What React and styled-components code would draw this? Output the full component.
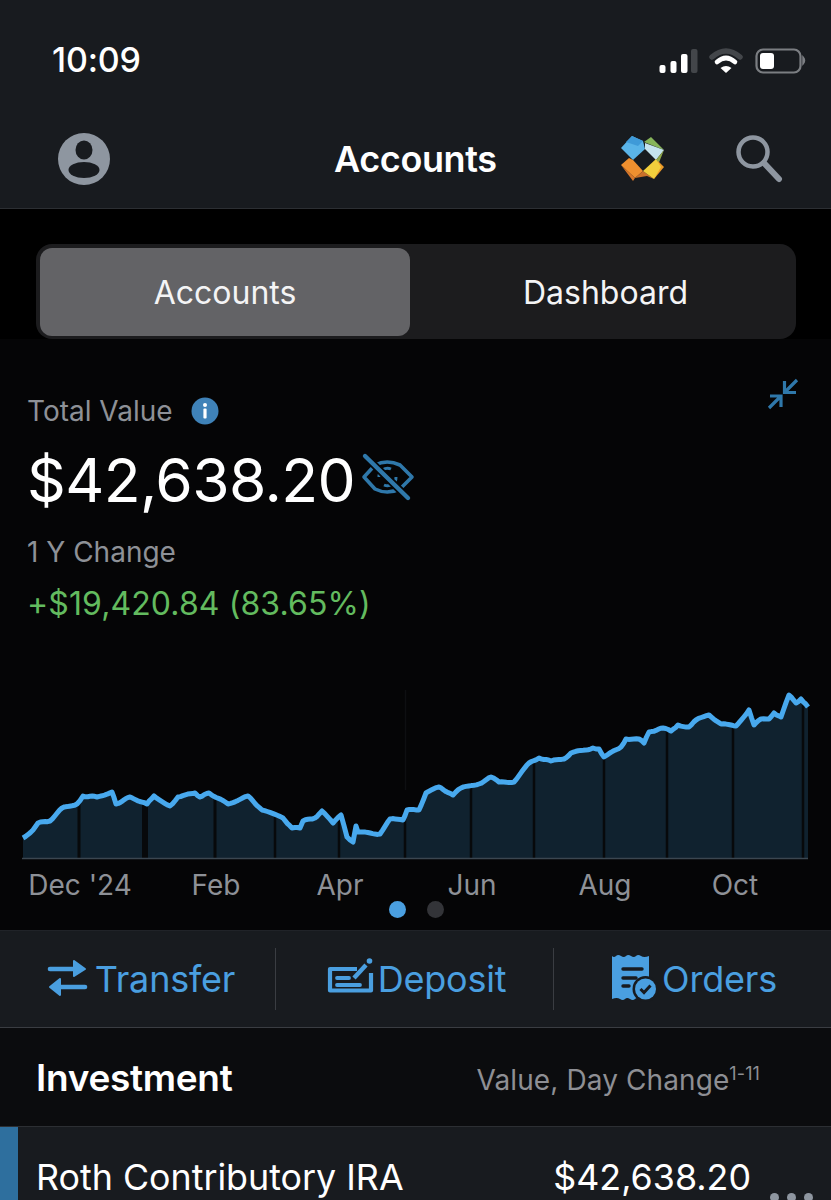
import React from 'react';
import styled, { createGlobalStyle } from 'styled-components';

const Global = createGlobalStyle`
  html, body { margin: 0; padding: 0; background: #000; }
  * { box-sizing: border-box; }
`;

const blue = '#4a9fe0';
const dimBlue = '#2f78aa';
const panel = '#181b1f';

const Page = styled.div`
  width: 831px;
  height: 1200px;
  overflow: hidden;
  position: relative;
  background: #000;
  color: #fff;
  font-family: Inter, "Liberation Sans", sans-serif;
`;

const Header = styled.header`
  height: 209px;
  background: ${panel};
  border-bottom: 1px solid #2c2f33;
  display: flex;
  flex-direction: column;
`;

const StatusBar = styled.div`
  height: 120px;
  padding: 40px 11px 0 52px;
  display: flex;
  justify-content: space-between;
  align-items: flex-start;
`;

const Clock = styled.span`
  font-size: 34px;
  line-height: 40px;
  font-weight: 500;
  letter-spacing: -0.2px;
`;

const NavBar = styled.nav`
  height: 80px;
  padding: 0 46px 2px 58px;
  display: grid;
  grid-template-columns: 276px auto 1fr;
  align-items: center;
`;

const NavTitle = styled.h1`
  margin: 0;
  font-size: 36px;
  font-weight: 600;
  letter-spacing: -0.4px;
`;

const NavRight = styled.div`
  display: flex;
  justify-content: flex-end;
  align-items: center;
  gap: 63px;
`;

const SegmentWrap = styled.div`
  padding: 35px 35px 0 36px;
  background: #000;
`;

const Segment = styled.div`
  height: 95px;
  padding: 4px 4px 3px;
  background: #1c1c1e;
  border-radius: 16px;
  display: grid;
  grid-template-columns: 370px 1fr;
`;

const SegmentItem = styled.div`
  height: 88px;
  border-radius: 12px;
  display: flex;
  align-items: center;
  justify-content: center;
  padding-left: ${p => (p.$active ? '0' : '9px')};
  font-size: 32px;
  color: #f4f4f5;
  background: ${p => (p.$active ? '#636366' : 'transparent')};
`;

const ChartSection = styled.section`
  position: relative;
  height: 591px;
  background: #050506;
  padding-top: 55px;
`;

const CollapseButton = styled.svg`
  position: absolute;
  right: 32px;
  top: 39px;
`;

const Caption = styled.div`
  margin-left: 27px;
  display: flex;
  align-items: center;
  gap: 18px;
  height: 34px;
  font-size: 28px;
  color: #8e9197;
`;

const BigValue = styled.div`
  margin: 17px 0 0 27px;
  height: 70px;
  display: flex;
  align-items: center;
  font-size: 60.5px;
  font-weight: 400;
  letter-spacing: -0.6px;
`;

const ChangeCaption = styled(Caption)`
  margin-top: 20px;
`;

const ChangeValue = styled.div`
  margin: 18px 0 0 27px;
  height: 34px;
  line-height: 34px;
  font-size: 32px;
  letter-spacing: 0.1px;
  color: #63bb5f;
`;

const ChartSvg = styled.svg`
  display: block;
  margin-top: 59px;
`;

const AxisRow = styled.div`
  margin: 6px 0 0 12px;
  width: 796px;
  display: grid;
  grid-template-columns: 136px 136px 112px 152px 114px 146px;
`;

const AxisLabel = styled.span`
  text-align: center;
  font-size: 28px;
  line-height: 34px;
  color: #8e9197;
`;

const Pager = styled.div`
  display: flex;
  justify-content: center;
  gap: 21px;
  margin: -1px 0 0 1px;
`;

const PagerDot = styled.span`
  width: 17px;
  height: 17px;
  border-radius: 50%;
  background: ${p => (p.$active ? blue : '#333438')};
`;

const ActionBar = styled.div`
  height: 98px;
  background: ${panel};
  border-top: 1px solid #202328;
  border-bottom: 1px solid #3a3d42;
  display: grid;
  grid-template-columns: 276px 278px 277px;
  align-items: center;
`;

const ActionCell = styled.div`
  height: 62px;
  padding-right: ${p => p.$trim || 0}px;
  display: flex;
  align-items: center;
  justify-content: center;
  color: ${blue};
  font-size: 36px;
  letter-spacing: -0.2px;
  border-right: ${p => (p.$divider ? '1px solid #3a3d42' : 'none')};
`;

const SectionHead = styled.div`
  height: 99px;
  padding: 0 71px 0 36px;
  background: #0b0c0e;
  border-bottom: 1px solid #2c2f33;
  display: flex;
  align-items: center;
  justify-content: space-between;
`;

const SectionTitle = styled.h2`
  margin: 0;
  font-size: 37px;
  font-weight: 600;
  letter-spacing: -0.3px;
`;

const SectionNote = styled.span`
  font-size: 28px;
  letter-spacing: 0.1px;
  color: #8e8f94;
  padding-top: 6px;
`;

const Sup = styled.sup`
  font-size: 18px;
  line-height: 0;
  vertical-align: 10px;
`;

const AccountRow = styled.div`
  position: relative;
  height: 100px;
  background: ${panel};
  border-left: 18px solid #2e6f9e;
  padding: 30px 80px 0 18px;
  display: flex;
  justify-content: space-between;
  align-items: flex-start;
  font-size: 35.8px;
  line-height: 40px;
`;

const MoreDots = styled.div`
  position: absolute;
  right: 18px;
  top: 66px;
  display: flex;
  gap: 8px;
`;

const MoreDot = styled.span`
  width: 9px;
  height: 9px;
  border-radius: 50%;
  background: #8e96a0;
`;

const anchors = [
  [23,838],[33,830],[38,823],[50,821],[62,808],[77,804],[83,796],[97,797],[112,792],[116,804],
  [130,797],[147,804],[154,796],[170,806],[178,797],[195,793],[200,797],[209,793],[228,804],[248,796],
  [262,810],[283,818],[292,828],[300,828],[303,821],[315,818],[322,811],[333,823],[341,815],[347,837],
  [353,842],[356,826],[358,832],[380,834],[390,819],[403,820],[407,810],[419,810],[426,793],[439,787],
  [453,795],[461,788],[479,784],[491,777],[499,782],[514,782],[529,763],[539,758],[551,761],[564,759],
  [571,753],[593,748],[599,749],[604,757],[621,747],[626,739],[639,739],[644,743],[649,732],[663,728],
  [671,731],[678,725],[689,727],[696,720],[709,715],[721,724],[736,726],[749,710],[754,725],[761,719],
  [769,719],[774,713],[781,717],[789,695],[796,703],[801,699],[808,707],
];

const gridLines = [[79,3],[145,6],[215,3],[275,2.5],[339,2.5],[405,2.5],[471,2.5],[534,2.5],[604,2.5],[667,2.5],[733,2.5],[803,2.5]];

function lineY(x) {
  for (let i = 0; i < anchors.length - 1; i++) {
    const [x0, y0] = anchors[i];
    const [x1, y1] = anchors[i + 1];
    if (x >= x0 && x <= x1) return y0 + ((y1 - y0) * (x - x0)) / (x1 - x0);
  }
  return 858;
}

function buildLine() {
  const pts = [];
  for (let i = 0; i < anchors.length - 1; i++) {
    const [x0, y0] = anchors[i];
    const [x1, y1] = anchors[i + 1];
    const steps = Math.max(1, Math.round((x1 - x0) / 2.5));
    for (let s = 0; s < steps; s++) {
      const t = s / steps;
      const x = x0 + (x1 - x0) * t;
      const jitter = s === 0 ? 0 : Math.sin(x * 2.3) * 0.6;
      pts.push(`${x.toFixed(1)},${(y0 + (y1 - y0) * t + jitter).toFixed(1)}`);
    }
  }
  pts.push('808,707');
  return pts.join(' ');
}

const Chart = () => {
  const line = buildLine();
  return (
    <ChartSvg width="831" height="182" viewBox="0 680 831 182">
      <line x1="405.5" y1="690" x2="405.5" y2="790" stroke="#0e0f11" strokeWidth="1.5" />
      <polygon points={`23,858 ${line} 808,858`} fill="#10222f" />
      {gridLines.map(([x, w]) => {
        const top = lineY(x);
        return <rect key={x} x={x - w / 2} y={top} width={w} height={858 - top} fill="#07090b" />;
      })}
      <polyline points={line} fill="none" stroke="#48a9ee" strokeWidth="5" strokeLinejoin="round" />
      <line x1="22" y1="858.5" x2="808" y2="858.5" stroke="#3b4650" strokeWidth="1.5" />
    </ChartSvg>
  );
};

const StatusIcons = () => (
  <svg width="170" height="40" viewBox="0 0 170 40">
    <rect x="9.5" y="25" width="6" height="8" rx="2" fill="#fff" />
    <rect x="20.5" y="21" width="6" height="12" rx="2" fill="#fff" />
    <rect x="31" y="14" width="6.5" height="19" rx="2" fill="#fff" />
    <rect x="41" y="9" width="6.5" height="24" rx="2" fill="#43464a" />
    <path d="M62 17 Q76 5 90 17" fill="none" stroke="#43464a" strokeWidth="5.5" strokeLinecap="round" />
    <path d="M67 22 Q76 14 85 22" fill="none" stroke="#fff" strokeWidth="4.6" strokeLinecap="round" />
    <path d="M70.5 28 L76 33 L81.5 28 Q76 24 70.5 28 Z" fill="#fff" />
    <rect x="106.5" y="9.5" width="44" height="23" rx="6.5" fill="none" stroke="#7b7e82" strokeWidth="2.2" />
    <rect x="110" y="13" width="14" height="16" rx="3" fill="#fff" />
    <path d="M153 17 Q156 20.5 153 24 Z" fill="#7b7e82" stroke="#7b7e82" strokeWidth="1.5" />
  </svg>
);

const Avatar = () => (
  <svg width="52" height="52" viewBox="0 0 52 52">
    <circle cx="26" cy="26" r="26" fill="#8e96a0" />
    <ellipse cx="26" cy="17" rx="8.5" ry="9.5" fill={panel} />
    <ellipse cx="26" cy="37" rx="15.5" ry="8" fill={panel} />
  </svg>
);

const Logo = () => (
  <svg width="60" height="60" viewBox="0 0 60 60">
    <polygon points="9,19 20,7 31,12 33,20 21,31" fill="#5ab4e8" />
    <polygon points="20,7 31,12 26,17 14,13" fill="#3f9ad8" />
    <polygon points="32,13 39,8 52,21" fill="#86b45a" />
    <polygon points="33,20 33,14 52,21 44,31" fill="#c5e3ee" />
    <polygon points="52,21 46,36 44,31" fill="#8fa84a" />
    <polygon points="9,36 17,29 21,31 31,42 23,49" fill="#f0902f" />
    <polygon points="9,36 23,49 21,52" fill="#d8772a" />
    <polygon points="46,32 52,38 42,50" fill="#ec9a2a" />
    <polygon points="23,49 31,42 42,50 35,47" fill="#c9702a" />
    <polygon points="31,42 44,30 49,38 42,50" fill="#f2cf3c" />
  </svg>
);

const Search = () => (
  <svg width="50" height="52" viewBox="0 0 50 52">
    <circle cx="18" cy="19" r="14.5" fill="none" stroke="#8e96a0" strokeWidth="4.5" />
    <line x1="29" y1="30" x2="44" y2="46" stroke="#8e96a0" strokeWidth="6" strokeLinecap="round" />
  </svg>
);

const InfoIcon = () => (
  <svg width="28" height="28" viewBox="0 0 28 28">
    <circle cx="14" cy="14" r="13.5" fill="#3f82b8" />
    <circle cx="14" cy="8" r="2" fill="#fff" />
    <rect x="12.4" y="11.5" width="3.2" height="10" rx="1" fill="#fff" />
  </svg>
);

const EyeOff = () => (
  <svg width="65" height="55" viewBox="0 0 65 55" style={{ marginTop: -5, flexShrink: 0 }}>
    <path d="M9 27 L20 15 Q32 9 45 15 L57 27 L45 39 Q32 45 20 39 Z" fill="none" stroke={dimBlue} strokeWidth="3.6" strokeLinejoin="round" />
    <path d="M24 27 A8.5 8.5 0 0 1 36 19 M41 27 A8.5 8.5 0 0 1 29 35" fill="none" stroke={dimBlue} strokeWidth="3" />
    <line x1="10" y1="6" x2="53" y2="48" stroke="#050506" strokeWidth="8" />
    <line x1="10" y1="6" x2="53" y2="48" stroke={dimBlue} strokeWidth="4.4" strokeLinecap="round" />
  </svg>
);

const Collapse = () => (
  <CollapseButton width="32" height="32" viewBox="0 0 32 32" fill="none" stroke={dimBlue} strokeWidth="3.2">
    <path d="M30 2 L18 14 M17.5 3 V14.5 H29" />
    <path d="M2 30 L13 19 M3 18 H14 V29" />
  </CollapseButton>
);

const TransferIcon = () => (
  <svg width="55" height="60" viewBox="0 0 55 60">
    <line x1="10" y1="20" x2="40" y2="20" stroke={blue} strokeWidth="4.6" strokeLinecap="round" />
    <polygon points="34,12 45,20 34,27" fill={blue} stroke={blue} strokeWidth="2" strokeLinejoin="round" />
    <line x1="14" y1="38" x2="45" y2="38" stroke={blue} strokeWidth="4.6" strokeLinecap="round" />
    <polygon points="20,30 10,38 20,46" fill={blue} stroke={blue} strokeWidth="2" strokeLinejoin="round" />
  </svg>
);

const DepositIcon = () => (
  <svg width="58" height="60" viewBox="0 0 58 60">
    <path d="M37 20 H10 V41.5 H51 V24" fill="none" stroke={blue} strokeWidth="4.2" strokeLinejoin="round" />
    <line x1="17" y1="29" x2="29" y2="29" stroke={blue} strokeWidth="3.8" strokeLinecap="round" />
    <line x1="17" y1="36" x2="40" y2="36" stroke={blue} strokeWidth="3.8" strokeLinecap="round" />
    <line x1="34" y1="29" x2="46" y2="16" stroke={blue} strokeWidth="4.4" />
    <circle cx="49.5" cy="12" r="2.8" fill={blue} />
  </svg>
);

const OrdersIcon = () => (
  <svg width="63" height="60" viewBox="0 0 63 60">
    <path d="M13 7 Q15 9 17 7 T22 7 T27 7 T32 7 T37 7 T42 7 T50 7 V50 Q48 48 46 50 T41 50 T36 50 T31 50 T26 50 T21 50 T13 50 Z" fill={blue} />
    <line x1="24" y1="20" x2="43" y2="20" stroke={panel} strokeWidth="3.4" strokeLinecap="round" />
    <line x1="24" y1="29" x2="37" y2="29" stroke={panel} strokeWidth="3.4" strokeLinecap="round" />
    <line x1="24" y1="37" x2="30" y2="37" stroke={panel} strokeWidth="3.4" strokeLinecap="round" />
    <circle cx="46.5" cy="40" r="13" fill={panel} />
    <circle cx="46.5" cy="40" r="10.5" fill={blue} />
    <path d="M41.5 40 L45 43.5 L51.5 36.5" fill="none" stroke={panel} strokeWidth="3" />
  </svg>
);

export default function App() {
  return (
    <Page>
      <Global />
      <Header>
        <StatusBar>
          <Clock>10:09</Clock>
          <StatusIcons />
        </StatusBar>
        <NavBar>
          <Avatar />
          <NavTitle>Accounts</NavTitle>
          <NavRight>
            <Logo />
            <Search />
          </NavRight>
        </NavBar>
      </Header>

      <SegmentWrap>
        <Segment>
          <SegmentItem $active>Accounts</SegmentItem>
          <SegmentItem>Dashboard</SegmentItem>
        </Segment>
      </SegmentWrap>

      <ChartSection>
        <Collapse />
        <Caption>Total Value <InfoIcon /></Caption>
        <BigValue>$42,638.20<EyeOff /></BigValue>
        <ChangeCaption>1 Y Change</ChangeCaption>
        <ChangeValue>+$19,420.84 (83.65%)</ChangeValue>
        <Chart />
        <AxisRow>
          {["Dec '24", 'Feb', 'Apr', 'Jun', 'Aug', 'Oct'].map(m => (
            <AxisLabel key={m}>{m}</AxisLabel>
          ))}
        </AxisRow>
        <Pager>
          <PagerDot $active />
          <PagerDot />
        </Pager>
      </ChartSection>

      <ActionBar>
        <ActionCell $divider><TransferIcon />Transfer</ActionCell>
        <ActionCell $divider $trim={3}><DepositIcon />Deposit</ActionCell>
        <ActionCell $trim={9}><OrdersIcon />Orders</ActionCell>
      </ActionBar>

      <SectionHead>
        <SectionTitle>Investment</SectionTitle>
        <SectionNote>Value, Day Change<Sup>1-11</Sup></SectionNote>
      </SectionHead>

      <AccountRow>
        <span>Roth Contributory IRA</span>
        <span>$42,638.20</span>
        <MoreDots>
          <MoreDot />
          <MoreDot />
          <MoreDot />
        </MoreDots>
      </AccountRow>
    </Page>
  );
}
